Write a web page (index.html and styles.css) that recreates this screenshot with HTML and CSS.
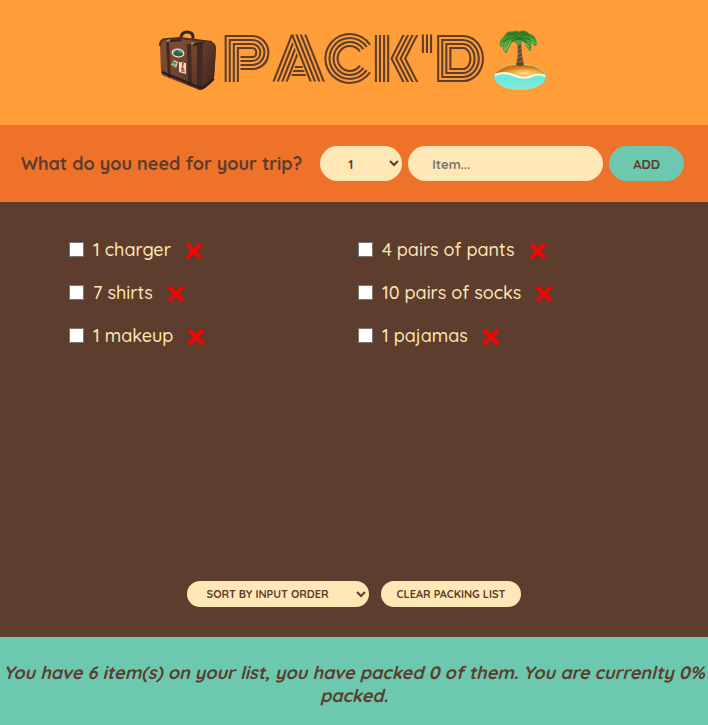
FILE: index.html
```html
<!DOCTYPE html>
<html lang="en">
<head>
<meta charset="utf-8">
<meta name="viewport" content="width=device-width, initial-scale=1">
<title>Pack'd</title>
<link rel="stylesheet" href="styles.css">
</head>
<body>
<header class="header">
  <svg class="emoji" viewBox="0 0 60 64" aria-hidden="true">
    <defs>
      <linearGradient id="leather" x1="0" y1="0" x2="1" y2="1"><stop offset="0" stop-color="#825038"/><stop offset=".5" stop-color="#704330"/><stop offset="1" stop-color="#4b2a1c"/></linearGradient>
      <linearGradient id="side" x1="0" y1="0" x2="1" y2="1"><stop offset="0" stop-color="#704431"/><stop offset="1" stop-color="#3b2016"/></linearGradient>
    </defs>
    <path d="M23 12V9Q24 4 29 4Q35 4 35 9V14" fill="none" stroke="#352720" stroke-width="3"/>
    <path d="M7 11L22 10L54 14Q58 15 58 21L56 50Q55 54 47 60Q43 63 39 61L6 48Q3 47 3 43L2 18Q2 12 7 11Z" fill="url(#leather)"/>
    <path d="M41 17L53 14Q58 15 58 21L56 50Q55 54 47 60Q43 63 39 61Z" fill="url(#side)"/>
    <path d="M2 18Q2 11 8 11L22 10L54 14" fill="none" stroke="#523023" stroke-width="2"/>
    <path d="M8 14L11 13L13 50L10 49ZM29 16L33 16L34 58L30 57ZM39 17L45 16L44 62L39 61Z" fill="#422a20"/>
    <path d="M11 12L22 11L24 13L12 14ZM31 16L43 14L48 15L36 18Z" fill="#34231c"/>
    <path d="M4 44L38 58L45 60L56 51" fill="none" stroke="#2d1b15" stroke-width="2"/>
    <path d="M9 13L12 12M33 16L36 15" stroke="#b68341" stroke-width="2"/>
    <ellipse cx="20" cy="25" rx="6.5" ry="4.5" fill="#e2e2d5" transform="rotate(8 20 25)"/>
    <ellipse cx="20" cy="25" rx="5" ry="3.3" fill="#4894a4" transform="rotate(8 20 25)"/>
    <path d="M15 26L19 22L22 25L24 24L25 27Q20 30 15 26Z" fill="#465b38"/>
    <path d="M16 32L20 34L18 40L13 37Z" fill="#ddd7a4"/><path d="M16 33L19 35L17 37L14 36Z" fill="#439787"/><path d="M14 37L18 39" stroke="#5b7b35"/>
    <path d="M21 34L28 35L28 46L21 44Z" fill="#eee0c8"/><path d="M24 35L26 35L25 39L27 43L23 42L24 38Z" fill="#be3f34"/><path d="M23 43L27 44" stroke="#417b7b"/>
  </svg>
  <h1 class="title">PACK'D</h1>
  <svg class="emoji" viewBox="0 0 60 64" aria-hidden="true">
    <defs>
      <linearGradient id="sea" x1="0" y1="0" x2="0" y2="1"><stop offset="0" stop-color="#b9f2de"/><stop offset=".55" stop-color="#65e9df"/><stop offset="1" stop-color="#91e8cd"/></linearGradient>
      <radialGradient id="sand" cx=".6" cy=".7"><stop offset="0" stop-color="#ffe092"/><stop offset=".6" stop-color="#eda638"/><stop offset="1" stop-color="#c7771d"/></radialGradient>
      <linearGradient id="leaf" x1="0" y1="0" x2="0" y2="1"><stop offset="0" stop-color="#287420"/><stop offset=".5" stop-color="#54a13c"/><stop offset="1" stop-color="#86bf56"/></linearGradient>
    </defs>
    <ellipse cx="30" cy="49" rx="26" ry="13" fill="url(#sea)"/>
    <path d="M5 46Q8 41 17 38Q29 35 43 38Q52 41 55 46Q47 45 43 48Q35 51 27 47Q17 44 5 46Z" fill="url(#sand)"/>
    <path d="M5 47Q14 43 23 47Q33 52 42 48Q48 45 55 48" fill="none" stroke="#fff6dc" stroke-width="2"/>
    <path d="M27 13H31L32 28L34 37Q30 39 26 37Q29 28 27 13Z" fill="#694428"/>
    <path d="M27 18L31 16M28 22L31 20M28 26L32 24M28 30L33 28M27 34L33 33" stroke="#a07752"/>
    <path d="M29 4Q35 1 39 6Q45 7 46 13Q47 17 45 18Q43 15 40 14Q42 19 40 23Q36 18 34 13L31 13Q31 17 28 17Q25 15 25 13Q21 13 20 17Q17 22 16 25Q12 22 14 17L13 17Q12 21 10 17Q10 11 15 8Q16 3 23 4Q26 2 29 4Z" fill="url(#leaf)" stroke="#4b9137"/>
    <path d="M29 10Q24 5 18 6M29 11Q20 8 13 14M29 11Q22 11 17 19M29 11Q34 5 39 7M29 11Q38 9 44 14M29 11Q37 12 40 20" fill="none" stroke="#277521" stroke-width="1.2"/>
    <path d="M21 13L17 20M41 11L44 15M36 15L39 19" stroke="#a1cd6b"/>
  </svg>
</header>

<form class="add-form">
  <h3 class="question">What do you need for your trip?</h3>
  <div class="fields">
    <select class="pill quantity" aria-label="Quantity"><option>1</option><option>2</option><option>3</option><option>4</option><option>5</option></select>
    <input class="pill item-name" type="text" placeholder="Item..." aria-label="Item">
    <button class="pill add" type="button">ADD</button>
  </div>
</form>

<main class="list">
  <ul class="items">
    <li class="item"><input type="checkbox" id="i1"><label for="i1">1 charger</label><button class="remove" type="button" aria-label="Remove charger"><svg viewBox="0 0 18 18"><path d="M2 2L16 16M16 2L2 16"/></svg></button></li>
    <li class="item"><input type="checkbox" id="i2"><label for="i2">4 pairs of pants</label><button class="remove" type="button" aria-label="Remove pants"><svg viewBox="0 0 18 18"><path d="M2 2L16 16M16 2L2 16"/></svg></button></li>
    <li class="item"><input type="checkbox" id="i3"><label for="i3">7 shirts</label><button class="remove" type="button" aria-label="Remove shirts"><svg viewBox="0 0 18 18"><path d="M2 2L16 16M16 2L2 16"/></svg></button></li>
    <li class="item"><input type="checkbox" id="i4"><label for="i4">10 pairs of socks</label><button class="remove" type="button" aria-label="Remove socks"><svg viewBox="0 0 18 18"><path d="M2 2L16 16M16 2L2 16"/></svg></button></li>
    <li class="item"><input type="checkbox" id="i5"><label for="i5">1 makeup</label><button class="remove" type="button" aria-label="Remove makeup"><svg viewBox="0 0 18 18"><path d="M2 2L16 16M16 2L2 16"/></svg></button></li>
    <li class="item"><input type="checkbox" id="i6"><label for="i6">1 pajamas</label><button class="remove" type="button" aria-label="Remove pajamas"><svg viewBox="0 0 18 18"><path d="M2 2L16 16M16 2L2 16"/></svg></button></li>
  </ul>
  <div class="actions">
    <select class="pill small sort" aria-label="Sort"><option>SORT BY INPUT ORDER</option><option>SORT BY DESCRIPTION</option><option>SORT BY PACKED STATUS</option></select>
    <button class="pill small" type="button">CLEAR PACKING LIST</button>
  </div>
</main>

<footer class="stats"><em>You have 6 item(s) on your list, you have packed 0 of them. You are currenlty 0% packed.</em></footer>
</body>
</html>
```
FILE: styles.css
```css
:root {
  --orange: #ff9d38;
  --brown: #5c3d2e;
  --cream: #ffe8b5;
  --teal: #6cc8ae;
}

* { box-sizing: border-box; margin: 0; padding: 0; }

body {
  display: grid;
  grid-template-columns: minmax(0, 1fr);
  grid-template-rows: auto auto 1fr auto;
  min-height: 100vh;
  background: var(--brown);
  color: var(--brown);
  font-family: Quicksand, Lato, sans-serif;
  font-size: 18px;
}

.header {
  display: flex;
  justify-content: center;
  align-items: center;
  gap: 4px;
  padding: 28px 0 33px;
  background: var(--orange);
}
.emoji { width: 60px; height: 64px; }
.title {
  font-family: Monoton, Lato, sans-serif;
  font-size: 58px;
  font-weight: 400;
  line-height: 64px;
}

.add-form {
  display: flex;
  justify-content: center;
  align-items: center;
  gap: 18px;
  padding: 21px 24px 21px 21px;
  background: #ef722b;
}
.question { font-size: 18px; font-weight: 700; line-height: 24px; white-space: nowrap; }
.fields { display: flex; gap: 6px; }

.pill {
  height: 35px;
  padding: 0 24px;
  border: 0;
  border-radius: 18px;
  background-color: var(--cream);
  color: var(--brown);
  font-family: inherit;
  font-size: 13px;
  font-weight: 700;
}
.quantity { width: 82px; }
.item-name { width: 195px; }
.item-name::placeholder { color: #757575; }
.add { background-color: var(--teal); }

.list {
  display: flex;
  flex-direction: column;
  justify-content: space-between;
  gap: 32px;
  padding: 31px 65px 30px;
  color: var(--cream);
}
.items {
  display: grid;
  grid-template-columns: repeat(auto-fit, minmax(250px, 1fr));
  row-gap: 11px;
  list-style: none;
}
.item { display: flex; align-items: center; height: 32px; padding-left: 4px; font-weight: 500; }
.item input {
  appearance: none;
  width: 15px;
  height: 15px;
  margin-right: 9px;
  border: 1px solid #767676;
  background: #fff;
}
.remove { display: flex; margin-left: 14px; padding-top: 3px; border: 0; background: none; }
.remove svg { width: 18px; height: 18px; fill: none; stroke: #f20505; stroke-width: 4px; }

.actions { display: flex; justify-content: center; gap: 12px; }
.small { height: 26px; padding: 0 16px; font-size: 11px; }
.sort { width: 182px; }

.stats {
  padding: 24px 0 18px;
  background: var(--teal);
  font-weight: 700;
  line-height: 23px;
  text-align: center;
}
```
